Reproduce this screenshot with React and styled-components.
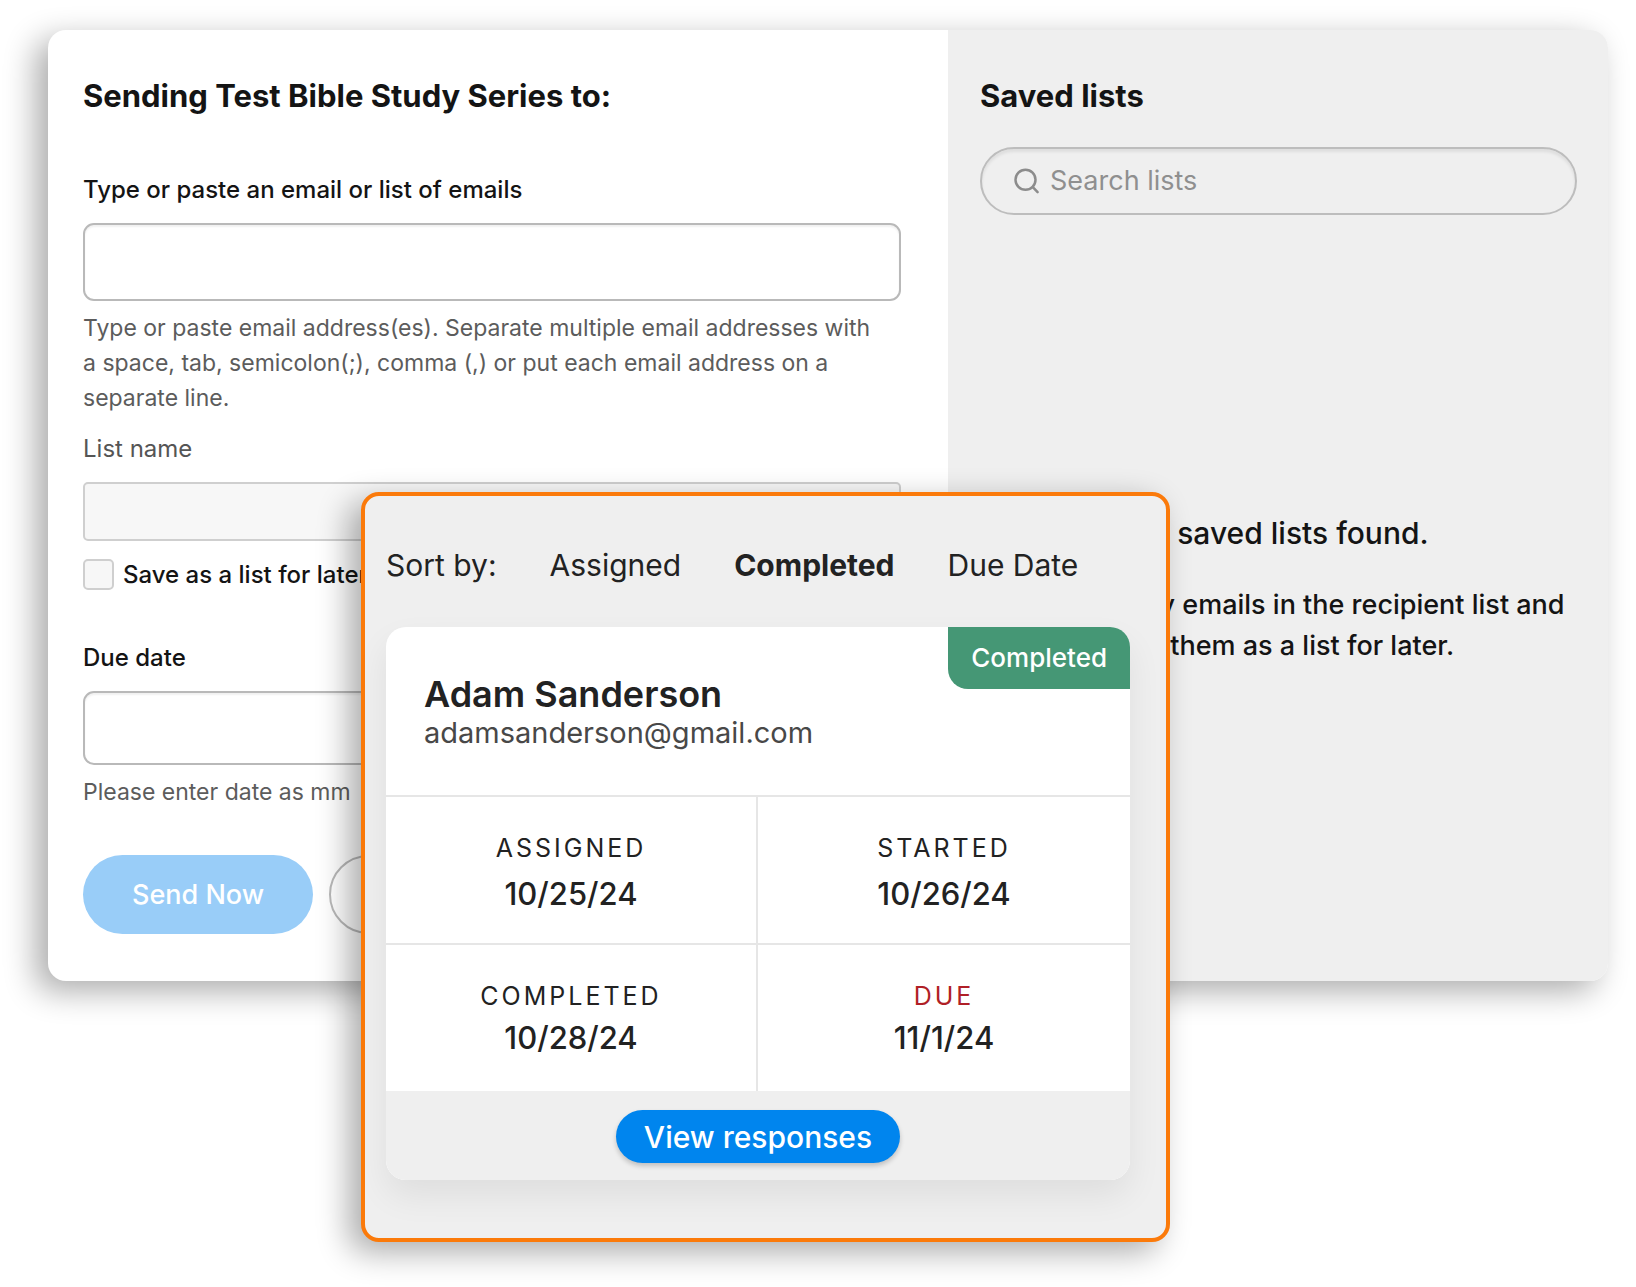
import React, { useState } from "react";
import styled, { createGlobalStyle, css } from "styled-components";

const GlobalStyle = createGlobalStyle`
  *, *::before, *::after { box-sizing: border-box; }
  body {
    margin: 0;
    background: #fff;
    color: #141414;
    font-family: Inter, "Liberation Sans", sans-serif;
  }
  h2, h3, p, dl, dt, dd { margin: 0; }
  button, input { font: inherit; color: inherit; }
`;

const Stage = styled.main`
  position: relative;
  min-height: 1287px;
  padding: 30px 28px 48px 48px;
`;

const Dialog = styled.section`
  display: grid;
  grid-template-columns: 900fr 660fr;
  border-radius: 18px;
  background: #fff;
  box-shadow: -12px 10px 32px rgba(0, 0, 0, 0.33);
`;

const Heading = styled.h2`
  font-size: 31px;
  line-height: 36px;
  font-weight: 700;
`;

const SendForm = styled.form`
  display: flex;
  flex-direction: column;
  min-width: 0;
  padding: 48px 47px 47px 35px;
`;

const Field = styled.div`
  display: flex;
  flex-direction: column;
  margin-top: ${(p) => p.$space}px;
`;

const Label = styled.label`
  font-size: 24px;
  line-height: 28px;
  font-weight: ${(p) => (p.$muted ? 400 : 500)};
  color: ${(p) => (p.$muted ? "#555" : "#141414")};
`;

const TextInput = styled.input`
  width: 100%;
  height: ${(p) => p.$height}px;
  margin-top: 19px;
  padding: 0 20px;
  border: 2px solid #b9b9b9;
  border-radius: 11px;
  background: #fff;
  box-shadow: inset 0 2px 2px rgba(0, 0, 0, 0.06);
  font-size: 24px;

  &:disabled {
    border-color: #cfcfcf;
    border-radius: 5px;
    background: #f7f7f7;
    box-shadow: none;
  }
`;

const Hint = styled.p`
  margin-top: 10px;
  padding-right: 20px;
  font-size: 23px;
  line-height: 35px;
  color: #5c5c5c;
`;

const CheckRow = styled.div`
  display: flex;
  align-items: center;
  gap: 9px;
  margin-top: 18px;
`;

const Checkbox = styled.input`
  appearance: none;
  flex: none;
  width: 31px;
  height: 31px;
  margin: 0;
  border: 2px solid #cfcfcf;
  border-radius: 5px;
  background: #f7f7f7;
`;

const Actions = styled.div`
  display: flex;
  gap: 16px;
  margin-top: 45px;
`;

const PillButton = styled.button`
  height: 79px;
  padding: 0 49px;
  border: 0;
  border-radius: 40px;
  font-size: 27px;
  font-weight: 500;
  white-space: nowrap;
  ${(p) =>
    p.$outline
      ? css`
          border: 2px solid #b9b9b9;
          background: #fff;
        `
      : css`
          background: #99cdf8;
          color: #fff;
        `}
`;

const Lists = styled.aside`
  display: flex;
  flex-direction: column;
  min-width: 0;
  padding: 48px 31px 17px 32px;
  border-radius: 0 18px 18px 0;
  background: #efefef;
`;

const SearchBox = styled.label`
  display: flex;
  align-items: center;
  gap: 10px;
  height: 68px;
  margin-top: 33px;
  padding: 0 32px;
  border: 2px solid #bdbdbd;
  border-radius: 34px;
  box-shadow: inset 0 3px 3px rgba(0, 0, 0, 0.07);
  color: #8c8c8c;

  svg { flex: none; }
`;

const SearchInput = styled.input`
  flex: 1;
  min-width: 0;
  padding: 0;
  border: 0;
  outline: 0;
  background: none;
  font-size: 27px;
  line-height: 34px;

  &::placeholder { color: #8f8f8f; opacity: 1; }
`;

const EmptyState = styled.div`
  display: flex;
  flex: 1;
  flex-direction: column;
  justify-content: center;
  gap: 31px;
  text-align: center;
`;

const EmptyTitle = styled.h3`
  font-size: 30px;
  line-height: 40px;
  font-weight: 500;
`;

const EmptyText = styled.p`
  font-size: 27px;
  line-height: 41px;
  font-weight: 500;
`;

const Overlay = styled.section`
  position: absolute;
  top: 492px;
  left: 361px;
  right: 466px;
  padding: 51px 36px 58px 21px;
  border: 4px solid #fb7a0a;
  border-radius: 18px;
  background: #efefef;
  box-shadow: -12px 10px 32px rgba(0, 0, 0, 0.33);
  color: #222;
`;

const SortBar = styled.div`
  display: flex;
  gap: 53px;
  font-size: 30px;
  line-height: 36px;
  white-space: nowrap;
`;

const SortButton = styled.button`
  padding: 0;
  border: 0;
  background: none;
  font-weight: ${(p) => (p.$active ? 700 : 400)};
`;

const CardShadow = styled.div`
  margin-top: 44px;
  border-radius: 20px;
  box-shadow: 0 16px 34px rgba(0, 0, 0, 0.07);
`;

const Card = styled.article`
  border-radius: 20px;
  overflow: hidden;
  background: #fff;
`;

const CardHeader = styled.header`
  position: relative;
  padding: 46px 38px 44px;
`;

const Badge = styled.span`
  position: absolute;
  top: 0;
  right: 0;
  padding: 0 23px;
  border-bottom-left-radius: 20px;
  background: #459775;
  color: #fff;
  font-size: 26px;
  line-height: 62px;
  font-weight: 500;
`;

const Name = styled.h3`
  font-size: 36px;
  line-height: 42px;
  font-weight: 600;
`;

const Email = styled.p`
  font-size: 29px;
  line-height: 36px;
  color: #484848;
`;

const DateRow = styled.dl`
  display: grid;
  grid-template-columns: 370fr 374fr;
  height: 148px;
  border-top: 2px solid #e6e6e6;

  dd { margin-top: ${(p) => p.$gap}px; }
`;

const DateCell = styled.div`
  padding-top: 36px;
  text-align: center;

  & + & { border-left: 2px solid #e6e6e6; }
`;

const DateLabel = styled.dt`
  font-size: 25px;
  line-height: 30px;
  letter-spacing: 3px;
  text-transform: uppercase;
  color: ${(p) => (p.$alert ? "#b01f26" : "#222")};
`;

const DateValue = styled.dd`
  font-size: 31px;
  line-height: 38px;
  font-weight: 500;
`;

const CardFooter = styled.footer`
  display: flex;
  justify-content: center;
  padding: 19px 18px 17px;
  background: #efefef;
`;

const ViewButton = styled.button`
  height: 53px;
  padding: 0 28px;
  border: 0;
  border-radius: 27px;
  background: #0085ee;
  box-shadow: 0 3px 5px rgba(0, 0, 0, 0.2);
  color: #fff;
  font-size: 30px;
  font-weight: 500;
  white-space: nowrap;
`;

const SORTS = ["Assigned", "Completed", "Due Date"];

const ROWS = [
  {
    gap: 12,
    cells: [
      { label: "Assigned", value: "10/25/24" },
      { label: "Started", value: "10/26/24" },
    ],
  },
  {
    gap: 8,
    cells: [
      { label: "Completed", value: "10/28/24" },
      { label: "Due", value: "11/1/24", alert: true },
    ],
  },
];

function SearchIcon() {
  return (
    <svg width="26" height="26" viewBox="0 0 26 26" fill="none" stroke="currentColor" strokeWidth="2.5" strokeLinecap="round" aria-hidden="true">
      <circle cx="11.5" cy="11.8" r="10" />
      <path d="M18.8 19.2 L23.6 24.2" />
    </svg>
  );
}

function AssignmentCard() {
  return (
    <Card>
      <CardHeader>
        <Badge>Completed</Badge>
        <Name>Adam Sanderson</Name>
        <Email>adamsanderson@gmail.com</Email>
      </CardHeader>
      {ROWS.map((row) => (
        <DateRow key={row.cells[0].label} $gap={row.gap}>
          {row.cells.map((cell) => (
            <DateCell key={cell.label}>
              <DateLabel $alert={cell.alert}>{cell.label}</DateLabel>
              <DateValue>{cell.value}</DateValue>
            </DateCell>
          ))}
        </DateRow>
      ))}
      <CardFooter>
        <ViewButton type="button">View responses</ViewButton>
      </CardFooter>
    </Card>
  );
}

export default function App() {
  const [sort, setSort] = useState("Completed");

  return (
    <>
      <GlobalStyle />
      <Stage>
        <Dialog>
          <SendForm onSubmit={(e) => e.preventDefault()}>
            <Heading>Sending Test Bible Study Series to:</Heading>
            <Field $space={62}>
              <Label htmlFor="emails">Type or paste an email or list of emails</Label>
              <TextInput id="emails" type="text" $height={78} />
              <Hint>
                Type or paste email address(es). Separate multiple email addresses with a space, tab,
                semicolon(;), comma (,) or put each email address on a separate line.
              </Hint>
            </Field>
            <Field $space={19}>
              <Label htmlFor="list-name" $muted>List name</Label>
              <TextInput id="list-name" type="text" disabled $height={59} />
              <CheckRow>
                <Checkbox id="save-list" type="checkbox" disabled />
                <Label htmlFor="save-list">Save as a list for later</Label>
              </CheckRow>
            </Field>
            <Field $space={54}>
              <Label htmlFor="due-date">Due date</Label>
              <TextInput id="due-date" type="text" $height={74} />
              <Hint>Please enter date as mm&nbsp; /&nbsp; dd&nbsp; /&nbsp; yyyy</Hint>
            </Field>
            <Actions>
              <PillButton type="submit">Send Now</PillButton>
              <PillButton type="button" $outline>Cancel</PillButton>
            </Actions>
          </SendForm>
          <Lists>
            <Heading>Saved lists</Heading>
            <SearchBox>
              <SearchIcon />
              <SearchInput type="search" placeholder="Search lists" aria-label="Search lists" />
            </SearchBox>
            <EmptyState>
              <EmptyTitle>No saved lists found.</EmptyTitle>
              <EmptyText>
                Enter as many emails in the recipient list and save them as a list for later.
              </EmptyText>
            </EmptyState>
          </Lists>
        </Dialog>
        <Overlay>
          <SortBar>
            <span>Sort by:</span>
            {SORTS.map((name) => (
              <SortButton key={name} type="button" $active={sort === name} aria-pressed={sort === name} onClick={() => setSort(name)}>
                {name}
              </SortButton>
            ))}
          </SortBar>
          <CardShadow>
            <AssignmentCard />
          </CardShadow>
        </Overlay>
      </Stage>
    </>
  );
}
